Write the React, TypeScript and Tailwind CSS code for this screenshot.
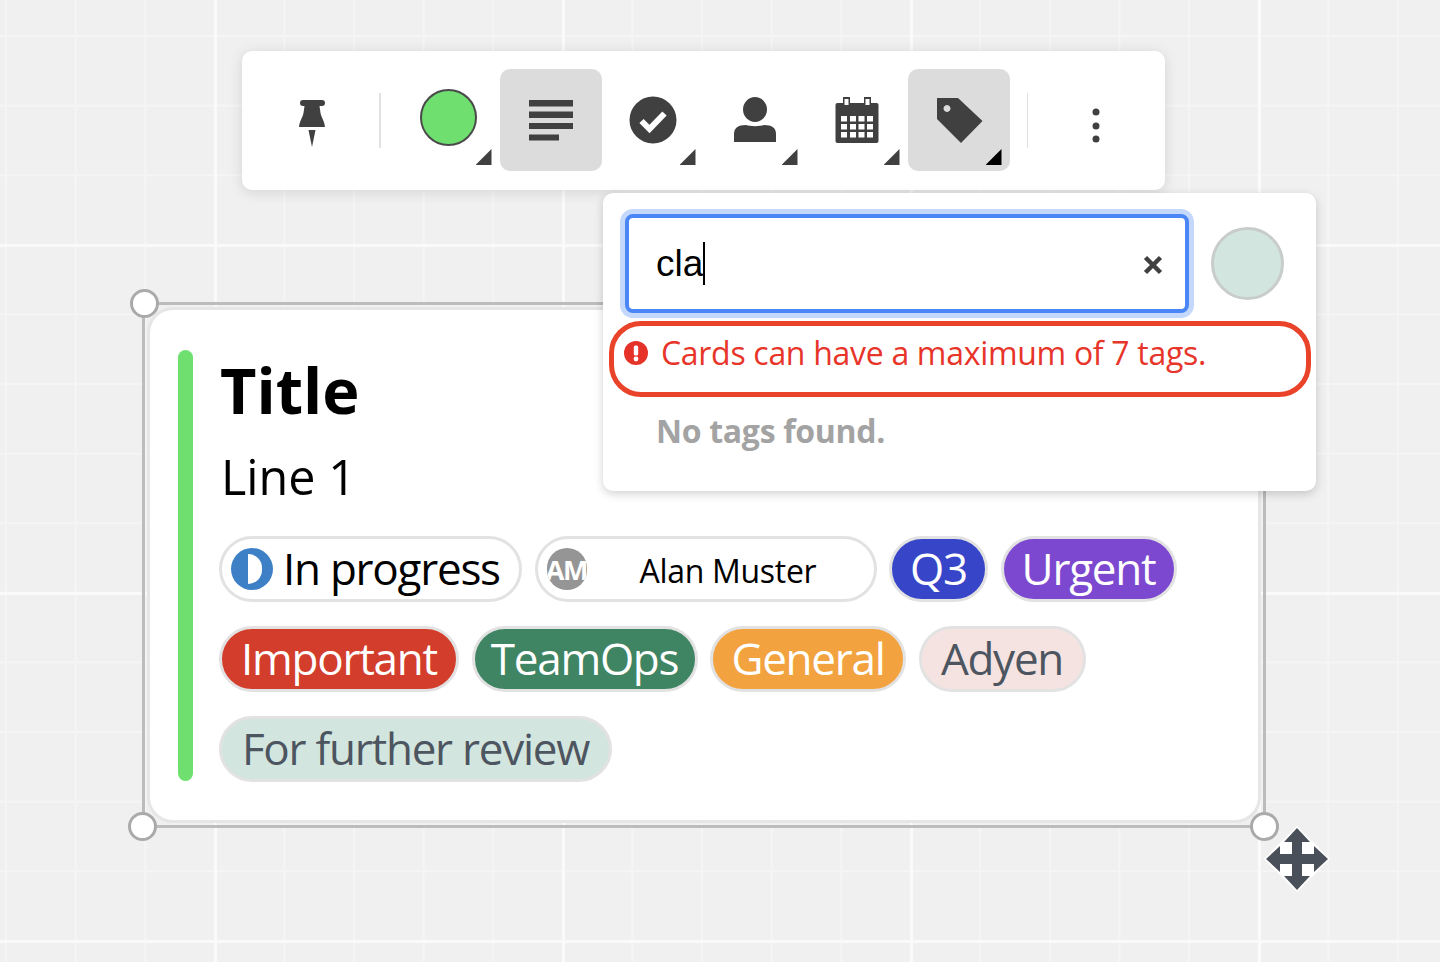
const openSans = "font-['Open_Sans',sans-serif]"

function Corner({ dark }: { dark?: boolean }) {
  return (
    <span
      className={`absolute right-[8px] bottom-[6px] h-[16px] w-[16px] [clip-path:polygon(100%_0,100%_100%,0_100%)] ${dark ? "bg-black" : "bg-[#404040]"}`}
    />
  )
}

function ToolButton({ active, corner, dark, children }: { active?: boolean; corner?: boolean; dark?: boolean; children: React.ReactNode }) {
  return (
    <div className={`relative flex h-[102px] w-[102px] shrink-0 items-center justify-center rounded-[10px] ${active ? "bg-[#dcdcdc]" : ""}`}>
      {children}
      {corner && <Corner dark={dark} />}
    </div>
  )
}

function Toolbar() {
  return (
    <div className="absolute top-[51px] left-[242px] flex h-[139px] w-[923px] items-start rounded-[10px] bg-white px-[18px] pt-[18px] shadow-[0_2px_14px_rgba(0,0,0,0.12)]">
      <ToolButton>
        <svg width="28" height="47" viewBox="0 0 28 47" fill="#404040" className="mt-[7px] translate-x-[1px]">
          <path d="M5 0H24a2.800 2.800 0 0 1 0 6H21.500L22.500 13C23.500 18 26.500 21 27 27H1C1.500 21 4.500 18 5.500 13L6.500 6H5a2.800 2.800 0 0 1 0-6Z" />
          <path d="M10.500 30H17.500L14 47Z" />
        </svg>
      </ToolButton>
      <div className="mx-[17px] mt-[24px] h-[55px] w-[2px] bg-[#e2e2e2]" />
      <ToolButton corner>
        <div className="h-[57px] w-[57px] -translate-y-[3px] rounded-full border-2 border-[#4a4a4a] bg-[#6fe070]" />
      </ToolButton>
      <ToolButton active>
        <svg width="44" height="42" viewBox="0 0 44 42" fill="#404040" className="translate-y-[1px]">
          <rect x="0" y="0" width="44" height="6.500" />
          <rect x="0" y="11.500" width="44" height="6.500" />
          <rect x="0" y="23" width="44" height="6" />
          <rect x="0" y="34.500" width="30" height="6" />
        </svg>
      </ToolButton>
      <ToolButton corner>
        <svg width="48" height="48" viewBox="0 0 48 48">
          <circle cx="24" cy="24" r="23.500" fill="#404040" />
          <path d="M12.500 25L20.500 33L35.500 17.500" fill="none" stroke="#fff" strokeWidth="6" />
        </svg>
      </ToolButton>
      <ToolButton corner>
        <svg width="44" height="46" viewBox="0 0 44 46" fill="#404040">
          <ellipse cx="22" cy="12.500" rx="12" ry="12.500" />
          <path d="M1 45V37C1 31 5 28 13 28C17 29.500 27 29.500 31 28C39 28 43 31 43 37V45Z" />
        </svg>
      </ToolButton>
      <ToolButton corner>
        <svg width="44" height="46" viewBox="0 0 44 46">
          <rect x="0.500" y="6" width="43" height="40" rx="2" fill="#404040" />
          <rect x="8" y="0" width="7" height="7" fill="#404040" />
          <rect x="29" y="0" width="7" height="7" fill="#404040" />
          <rect x="9.500" y="2" width="4" height="6" fill="#fff" />
          <rect x="30.500" y="2" width="4" height="6" fill="#fff" />
          {[19, 27, 35].flatMap((y) =>
            [6, 15, 23.500, 32].map((x) => <rect key={`${x}-${y}`} x={x} y={y} width="6" height="5.500" fill="#fff" />),
          )}
        </svg>
      </ToolButton>
      <ToolButton active corner dark>
        <svg width="46" height="46" viewBox="0 0 46 46" fill="#404040" className="translate-x-[1px] translate-y-[1px]">
          <path fillRule="evenodd" d="M0 0H21L45.500 23L24 45L0 21ZM10 7a3.500 3.500 0 1 0 0.010 0Z" />
        </svg>
      </ToolButton>
      <div className="mx-[17px] mt-[24px] h-[55px] w-[2px] bg-[#e2e2e2]" />
      <ToolButton>
        <svg width="8" height="36" viewBox="0 0 8 36" fill="#404040" className="translate-y-[6px]">
          <circle cx="4" cy="4" r="3.500" />
          <circle cx="4" cy="18" r="3.500" />
          <circle cx="4" cy="31" r="3.500" />
        </svg>
      </ToolButton>
    </div>
  )
}

function TagPopover() {
  return (
    <div className={`absolute top-[193px] left-[603px] h-[298px] w-[713px] rounded-[10px] bg-white shadow-[0_3px_10px_rgba(0,0,0,0.18)] ${openSans}`}>
      <div className="flex items-center pt-[21px] pl-[22px]">
        <div className="flex h-[99px] w-[564px] items-center justify-between rounded-[8px] border-4 border-[#4a86f5] bg-white pr-[22px] pl-[27px] shadow-[0_0_0_5px_#c3d8fb]">
          <div className="flex items-center">
            <span className="font-['Liberation_Sans',sans-serif] text-[37px] leading-none text-black">cla</span>
            <span className="h-[43px] w-[2px] bg-black" />
          </div>
          <svg width="20" height="20" viewBox="0 0 20 20" stroke="#404040" strokeWidth="4.500" className="translate-y-[1px]">
            <path d="M2.500 2.500L17.500 17.500M17.500 2.500L2.500 17.500" />
          </svg>
        </div>
        <div className="ml-[22px] h-[73px] w-[73px] rounded-full border-[3px] border-[#c8cdca] bg-[#d3e5df]" />
      </div>
      <div className="mt-[18px] flex items-center gap-[13px] pl-[21px]">
        <svg width="24" height="24" viewBox="0 0 24 24">
          <circle cx="12" cy="12" r="12" fill="#e63329" />
          <rect x="9.800" y="4.500" width="4.400" height="10" rx="1.500" fill="#fff" />
          <circle cx="12" cy="18" r="2.400" fill="#fff" />
        </svg>
        <span className="text-[32px] leading-[44px] tracking-[-0.3px] text-[#e8352a]">Cards can have a maximum of 7 tags.</span>
      </div>
      <div className="mt-[34px] pl-[53px] text-[32px] leading-[44px] font-bold tracking-[-0.3px] text-[#a3a3a3]">No tags found.</div>
      <div className="absolute top-[128px] left-[6px] h-[76px] w-[702px] rounded-[32px] border-[5px] border-[#e9432a]" />
    </div>
  )
}

function Chip({ className, children }: { className: string; children: React.ReactNode }) {
  return <div className={`flex h-[66px] items-center rounded-full border-[3px] border-[#e2e2e2] pb-[2px] text-[44px] leading-none tracking-[-1.25px] whitespace-nowrap ${className}`}>{children}</div>
}

function Handle({ className }: { className: string }) {
  return <div className={`absolute h-[29px] w-[29px] rounded-full border-[3px] border-[#aaaaaa] bg-white ${className}`} />
}

function Card() {
  return (
    <div className="absolute top-[302px] left-[142px] h-[526px] w-[1124px] border-[3px] border-[#bcbcbc]">
      <div className={`m-[2px] flex h-[516px] rounded-[26px] border-[3px] border-[#e6e6e6] bg-white pt-[40px] pl-[28px] ${openSans}`}>
        <div className="h-[431px] w-[15px] shrink-0 rounded-full bg-[#6fe070]" />
        <div className="ml-[26px] flex-1">
          <div className="mt-[-2px] ml-[1px] text-[63px] leading-[84px] font-bold text-black">Title</div>
          <div className="mt-[11px] ml-[2px] text-[48.500px] leading-[66px] text-black">Line 1</div>
          <div className="mt-[27px] flex w-[980px] flex-wrap gap-x-[12.500px] gap-y-[24px]">
            <Chip className="w-[303px] bg-white pl-[9px] text-black">
              <span className="mt-[2px] mr-[10px] flex h-[42px] w-[42px] shrink-0 items-center justify-center rounded-full bg-[#3d80c6]">
                <span className="ml-[6px] h-[30px] w-[14px] rounded-r-full bg-white" />
              </span>
              In progress
            </Chip>
            <Chip className="w-[342px] bg-white pl-[9px] text-black">
              <span className="mt-[2px] flex h-[42px] w-[40px] shrink-0 items-center justify-center overflow-hidden rounded-full bg-[#959595] text-[27px] font-bold text-white">AM</span>
              <span className="mt-[5px] ml-[53px] text-[32px] tracking-[-0.3px]">Alan Muster</span>
            </Chip>
            <Chip className="w-[99px] justify-center bg-[#3745c8] text-white">Q3</Chip>
            <Chip className="w-[176px] justify-center bg-[#7c48d0] text-white">Urgent</Chip>
            <Chip className="w-[240px] justify-center bg-[#d33d2b] text-white">Important</Chip>
            <Chip className="w-[226px] justify-center bg-[#3f8463] text-white">TeamOps</Chip>
            <Chip className="w-[196px] justify-center bg-[#f2a340] text-white">General</Chip>
            <Chip className="w-[167px] justify-center bg-[#f5e3e1] text-[#4d5560]">Adyen</Chip>
            <Chip className="w-[393px] justify-center bg-[#d3e5df] text-[#4d5560]">For further review</Chip>
          </div>
        </div>
      </div>
      <Handle className="-top-[16px] -left-[15px]" />
      <Handle className="-bottom-[16px] -left-[17px]" />
      <Handle className="-right-[16px] -bottom-[16px]" />
    </div>
  )
}

export default function App() {
  return (
    <div className="relative h-[962px] w-[1440px] overflow-hidden bg-[#f0f0f0] [background-image:linear-gradient(to_right,#fafafa_3px,transparent_3px),linear-gradient(to_bottom,#fafafa_3px,transparent_3px),linear-gradient(to_right,#f5f5f5_2px,transparent_2px),linear-gradient(to_bottom,#f5f5f5_2px,transparent_2px)] [background-position:214px_244px,214px_244px,5px_35px,5px_35px] [background-size:348px_348px,348px_348px,69.600px_69.600px,69.600px_69.600px]">
      <Card />
      <Toolbar />
      <TagPopover />
      <svg width="66" height="66" viewBox="-33 -33 66 66" className="absolute top-[826px] left-[1264px]">
        <path d="M0-33L33 0L0 33L-33 0Z" fill="#fff" />
        <path
          d="M0-31L13-17H5V-5H17V-13L31 0L17 13V5H5V17H13L0 31L-13 17H-5V5H-17V13L-31 0L-17-13V-5H-5V-17H-13Z"
          fill="#4a505a"
        />
      </svg>
    </div>
  )
}
